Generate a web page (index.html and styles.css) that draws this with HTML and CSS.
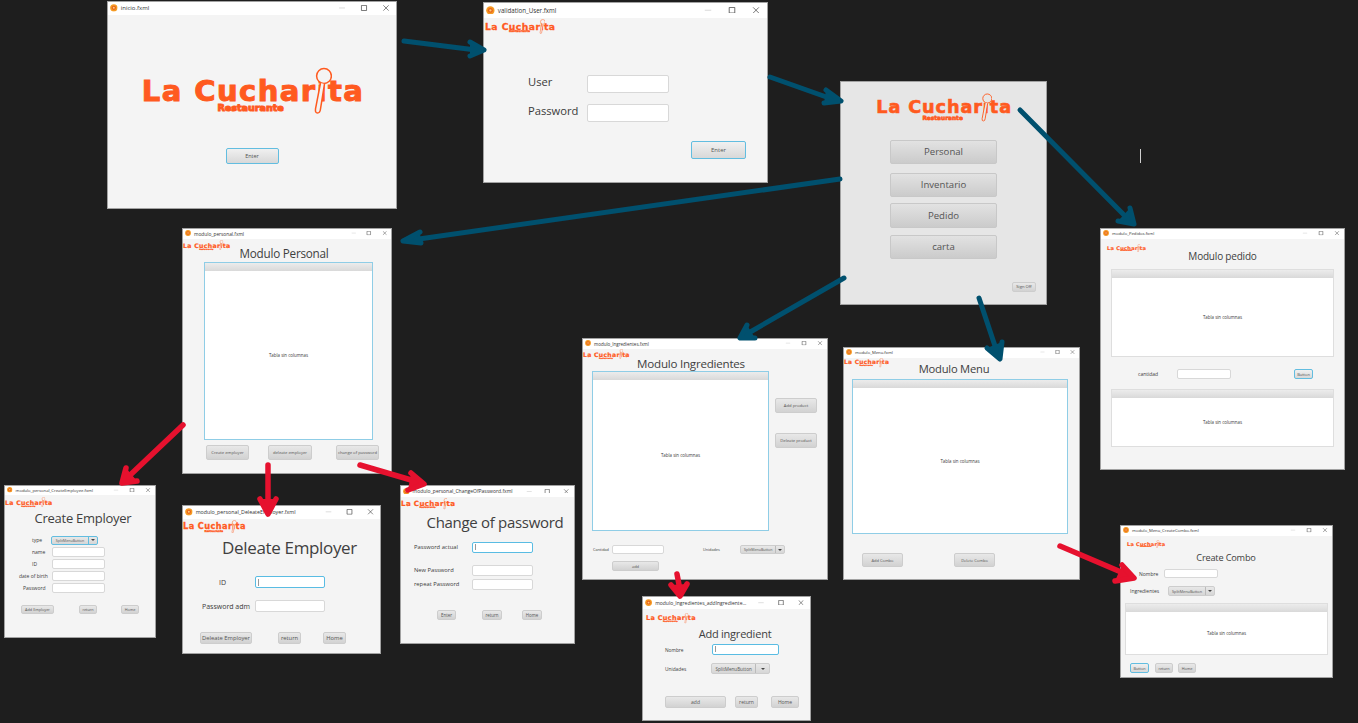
FILE: index.html
```html
<!DOCTYPE html>
<html lang="es">
<head>
    <meta charset="UTF-8">
    <meta name="viewport" content="width=device-width, initial-scale=1.0">
    <title>La Cucharita - flujo de pantallas</title>
    <link rel="stylesheet" href="styles.css">
</head>
<body>
    <svg class="defs" width="0" height="0">
        <symbol id="app" viewBox="0 0 10 10"><circle cx="5" cy="5" r="4.8" fill="#f59a23"/><circle cx="5" cy="5" r="2.8" fill="#e8621a"/><circle cx="5" cy="5" r="1.3" fill="#fbc97a"/></symbol>
        <symbol id="min" viewBox="0 0 10 10"><path d="M0 5h10" fill="none" stroke="#c4c4c4"/></symbol>
        <symbol id="max" viewBox="0 0 10 10"><path d="M.7.7h8.6v8.6H.7z" fill="none" stroke="#444" stroke-width="1.2"/></symbol>
        <symbol id="close" viewBox="0 0 10 10"><path d="M.5.5l9 9M9.5.5l-9 9" fill="none" stroke="#444" stroke-width="1.1"/></symbol>
        <symbol id="spoon" viewBox="0 0 20 47"><circle cx="12" cy="9" r="7.4"/><path d="M8.5 16 3.5 42Q3 46 5.5 46 8 46 8.5 42L12.5 17"/></symbol>
    </svg>

    <main class="canvas">
        <!-- inicio -->
        <section class="window win-inicio">
            <header class="titlebar"><svg class="app-icon"><use href="#app"/></svg><span>inicio.fxml</span><div class="controls"><svg><use href="#min"/></svg><svg><use href="#max"/></svg><svg><use href="#close"/></svg></div></header>
            <div class="win-body">
                <div class="logo"><span class="logo-name">La Cucharita</span><span class="logo-sub">Restaurante</span><svg class="spoon"><use href="#spoon"/></svg></div>
                <button class="btn focused enter">Enter</button>
            </div>
        </section>

        <!-- login -->
        <section class="window win-login">
            <header class="titlebar"><svg class="app-icon"><use href="#app"/></svg><span>validation_User.fxml</span><div class="controls"><svg><use href="#min"/></svg><svg><use href="#max"/></svg><svg><use href="#close"/></svg></div></header>
            <div class="win-body">
                <div class="logo"><span class="logo-name">La Cucharita</span><span class="logo-sub">Restaurante</span><svg class="spoon"><use href="#spoon"/></svg></div>
                <div class="form">
                    <label>User</label><input type="text">
                    <label>Password</label><input type="text">
                </div>
                <button class="btn focused enter">Enter</button>
            </div>
        </section>

        <!-- menu principal -->
        <section class="window win-main">
            <div class="win-body">
                <div class="logo"><span class="logo-name">La Cucharita</span><span class="logo-sub">Restaurante</span><svg class="spoon"><use href="#spoon"/></svg></div>
                <button class="btn nav">Personal</button>
                <button class="btn nav">Inventario</button>
                <button class="btn nav">Pedido</button>
                <button class="btn nav">carta</button>
                <button class="btn sign-off">Sign Off</button>
            </div>
        </section>

        <!-- modulo personal -->
        <section class="window win-personal">
            <header class="titlebar"><svg class="app-icon"><use href="#app"/></svg><span>modulo_personal.fxml</span><div class="controls"><svg><use href="#min"/></svg><svg><use href="#max"/></svg><svg><use href="#close"/></svg></div></header>
            <div class="win-body">
                <div class="head">
                    <div class="logo"><span class="logo-name">La Cucharita</span><span class="logo-sub">Restaurante</span><svg class="spoon"><use href="#spoon"/></svg></div>
                    <h2 class="title">Modulo Personal</h2>
                </div>
                <div class="table focused"><div class="table-head"></div><div class="table-empty">Tabla sin columnas</div></div>
                <div class="actions">
                    <button class="btn">Create employer</button>
                    <button class="btn">deleate employer</button>
                    <button class="btn">change of password</button>
                </div>
            </div>
        </section>

        <!-- create employer -->
        <section class="window win-create">
            <header class="titlebar"><svg class="app-icon"><use href="#app"/></svg><span>modulo_personal_CreateEmployee.fxml</span><div class="controls"><svg><use href="#min"/></svg><svg><use href="#max"/></svg><svg><use href="#close"/></svg></div></header>
            <div class="win-body">
                <div class="head">
                    <div class="logo"><span class="logo-name">La Cucharita</span><span class="logo-sub">Restaurante</span><svg class="spoon"><use href="#spoon"/></svg></div>
                    <h2 class="title">Create Employer</h2>
                </div>
                <div class="form">
                    <label>type</label><div class="split focused"><span>SplitMenuButton</span><i></i></div>
                    <label>name</label><input type="text">
                    <label>ID</label><input type="text">
                    <label>date of birth</label><input type="text">
                    <label>Password</label><input type="text">
                </div>
                <div class="actions">
                    <button class="btn">Add Employer</button>
                    <button class="btn">return</button>
                    <button class="btn">Home</button>
                </div>
            </div>
        </section>

        <!-- deleate employer -->
        <section class="window win-delete">
            <header class="titlebar"><svg class="app-icon"><use href="#app"/></svg><span>modulo_personal_DeleateEmployer.fxml</span><div class="controls"><svg><use href="#min"/></svg><svg><use href="#max"/></svg><svg><use href="#close"/></svg></div></header>
            <div class="win-body">
                <div class="head">
                    <div class="logo"><span class="logo-name">La Cucharita</span><span class="logo-sub">Restaurante</span><svg class="spoon"><use href="#spoon"/></svg></div>
                    <h2 class="title">Deleate Employer</h2>
                </div>
                <div class="form">
                    <label>ID</label><input class="focused caret" type="text">
                    <label>Password adm</label><input type="text">
                </div>
                <div class="actions">
                    <button class="btn">Deleate Employer</button>
                    <button class="btn">return</button>
                    <button class="btn">Home</button>
                </div>
            </div>
        </section>

        <!-- change of password -->
        <section class="window win-change">
            <header class="titlebar"><svg class="app-icon"><use href="#app"/></svg><span>modulo_personal_ChangeOfPassword.fxml</span><div class="controls"><svg><use href="#min"/></svg><svg><use href="#max"/></svg><svg><use href="#close"/></svg></div></header>
            <div class="win-body">
                <div class="head">
                    <div class="logo"><span class="logo-name">La Cucharita</span><span class="logo-sub">Restaurante</span><svg class="spoon"><use href="#spoon"/></svg></div>
                    <h2 class="title">Change of password</h2>
                </div>
                <div class="form">
                    <label>Password actual</label><input class="focused caret" type="text">
                    <label>New Password</label><input type="text">
                    <label>repeat Password</label><input type="text">
                </div>
                <div class="actions">
                    <button class="btn">Enter</button>
                    <button class="btn">return</button>
                    <button class="btn">Home</button>
                </div>
            </div>
        </section>

        <!-- modulo ingredientes -->
        <section class="window win-ingredients">
            <header class="titlebar"><svg class="app-icon"><use href="#app"/></svg><span>modulo_Ingredientes.fxml</span><div class="controls"><svg><use href="#min"/></svg><svg><use href="#max"/></svg><svg><use href="#close"/></svg></div></header>
            <div class="win-body">
                <div class="head">
                    <div class="logo"><span class="logo-name">La Cucharita</span><span class="logo-sub">Restaurante</span><svg class="spoon"><use href="#spoon"/></svg></div>
                    <h2 class="title">Modulo Ingredientes</h2>
                </div>
                <div class="split-view">
                    <div class="table focused"><div class="table-head"></div><div class="table-empty">Tabla sin columnas</div></div>
                    <div class="side">
                        <button class="btn">Add product</button>
                        <button class="btn">Deleate product</button>
                    </div>
                </div>
                <div class="inline-form">
                    <label>Cantidad</label><input type="text">
                    <label class="second">Unidades</label><div class="split"><span>SplitMenuButton</span><i></i></div>
                </div>
                <button class="btn add">add</button>
            </div>
        </section>

        <!-- add ingredient -->
        <section class="window win-add">
            <header class="titlebar"><svg class="app-icon"><use href="#app"/></svg><span>modulo_Ingredientes_addIngrediente...</span><div class="controls"><svg><use href="#min"/></svg><svg><use href="#max"/></svg><svg><use href="#close"/></svg></div></header>
            <div class="win-body">
                <div class="head">
                    <div class="logo"><span class="logo-name">La Cucharita</span><span class="logo-sub">Restaurante</span><svg class="spoon"><use href="#spoon"/></svg></div>
                    <h2 class="title">Add ingredient</h2>
                </div>
                <div class="form">
                    <label>Nombre</label><input class="focused caret" type="text">
                    <label>Unidades</label><div class="split"><span>SplitMenuButton</span><i></i></div>
                </div>
                <div class="actions">
                    <button class="btn">add</button>
                    <button class="btn">return</button>
                    <button class="btn">Home</button>
                </div>
            </div>
        </section>

        <!-- modulo menu -->
        <section class="window win-menu">
            <header class="titlebar"><svg class="app-icon"><use href="#app"/></svg><span>modulo_Menu.fxml</span><div class="controls"><svg><use href="#min"/></svg><svg><use href="#max"/></svg><svg><use href="#close"/></svg></div></header>
            <div class="win-body">
                <div class="head">
                    <div class="logo"><span class="logo-name">La Cucharita</span><span class="logo-sub">Restaurante</span><svg class="spoon"><use href="#spoon"/></svg></div>
                    <h2 class="title">Modulo Menu</h2>
                </div>
                <div class="table focused"><div class="table-head"></div><div class="table-empty">Tabla sin columnas</div></div>
                <div class="actions">
                    <button class="btn">Add Combo</button>
                    <button class="btn">Delete Combo</button>
                </div>
            </div>
        </section>

        <!-- modulo pedido -->
        <section class="window win-orders">
            <header class="titlebar"><svg class="app-icon"><use href="#app"/></svg><span>modulo_Pedidos.fxml</span><div class="controls"><svg><use href="#min"/></svg><svg><use href="#max"/></svg><svg><use href="#close"/></svg></div></header>
            <div class="win-body">
                <div class="head">
                    <div class="logo"><span class="logo-name">La Cucharita</span><span class="logo-sub">Restaurante</span><svg class="spoon"><use href="#spoon"/></svg></div>
                    <h2 class="title">Modulo pedido</h2>
                </div>
                <div class="table top-table"><div class="table-head"></div><div class="table-empty">Tabla sin columnas</div></div>
                <div class="inline-form">
                    <label>cantidad</label><input type="text">
                    <button class="btn focused">Button</button>
                </div>
                <div class="table bottom-table"><div class="table-head"></div><div class="table-empty">Tabla sin columnas</div></div>
            </div>
        </section>

        <!-- create combo -->
        <section class="window win-combo">
            <header class="titlebar"><svg class="app-icon"><use href="#app"/></svg><span>modulo_Menu_CreateCombo.fxml</span><div class="controls"><svg><use href="#min"/></svg><svg><use href="#max"/></svg><svg><use href="#close"/></svg></div></header>
            <div class="win-body">
                <div class="head">
                    <div class="logo"><span class="logo-name">La Cucharita</span><span class="logo-sub">Restaurante</span><svg class="spoon"><use href="#spoon"/></svg></div>
                    <h2 class="title">Create Combo</h2>
                </div>
                <div class="inline-form name-row"><label>Nombre</label><input type="text"></div>
                <div class="inline-form parts-row"><label>Ingredientes</label><div class="split"><span>SplitMenuButton</span><i></i></div></div>
                <div class="table"><div class="table-head"></div><div class="table-empty">Tabla sin columnas</div></div>
                <div class="actions">
                    <button class="btn focused">Button</button>
                    <button class="btn">return</button>
                    <button class="btn">Home</button>
                </div>
            </div>
        </section>

        <div class="text-cursor"></div>

        <!-- flechas -->
        <svg class="arrows" viewBox="0 0 1358 723">
            <g class="teal">
                <path d="M404 41 476 50"/><path d="M470 42 484 50 470 56"/>
                <path d="M770 77 832 99"/><path d="M826 90 841 101 824 103"/>
                <path d="M1020 110 1127 218"/><path d="M1130 208 1134 224 1118 221"/>
                <path d="M840 179 412 240"/><path d="M420 232 403 241 421 243"/>
                <path d="M844 278 745 335"/><path d="M747 325 740 338 755 338"/>
                <path d="M979 298 997 352"/><path d="M987 348 1000 359 1002 342"/>
            </g>
            <g class="red">
                <path d="M183 425 127 478"/><path d="M126 468 122 483 137 481"/>
                <path d="M268 465V510"/><path d="M260 499 268 514 276 499"/>
                <path d="M360 465 418 482"/><path d="M411 473 424 484 408 490"/>
                <path d="M677 574 680 590"/><path d="M671 585 680 596 687 584"/>
                <path d="M1060 546 1128 575"/><path d="M1122 565 1134 578 1115 581"/>
            </g>
        </svg>
    </main>
</body>
</html>
```

FILE: styles.css
```css
* { box-sizing: border-box; }
html, body { margin: 0; height: 100%; overflow: hidden; background-color: #1e1e1e; }
body { font-family: "Open Sans", "Noto Sans", sans-serif; color: #3a3a3a; }
.defs { position: absolute; }
.canvas { position: relative; width: 1358px; height: 723px; }

/* ventanas */
.window { position: absolute; background-color: #f4f4f4; outline: 1px solid #a2a2a2; outline-offset: -1px; overflow: hidden; }
.titlebar { display: flex; align-items: center; height: var(--bar); padding-left: 3px; background-color: #fff; color: #333; font-size: var(--bar-text); white-space: nowrap; }
.app-icon { width: calc(var(--bar) * .55); height: calc(var(--bar) * .55); margin-right: 3px; flex: none; }
.controls { display: flex; margin-left: auto; flex: none; background-color: #fff; }
.controls svg { width: var(--cell); height: calc(var(--cell) * .27); }

/* logo */
.logo { position: relative; display: block; width: 7.6em; height: 1.62em; font-family: "DejaVu Sans", sans-serif; font-weight: bold; color: #ff5a1f; line-height: 1; white-space: nowrap; justify-self: start; -webkit-text-stroke: .035em #ff5a1f; }
.logo-name { display: block; padding-top: .41em; line-height: .84; letter-spacing: .05em; }
.logo-sub { display: block; margin-left: 7.9em; font-size: .33em; }
.spoon { position: absolute; left: 5.86em; top: 0; width: .69em; height: 1.62em; fill: #f4f4f4; stroke: #ff5a1f; stroke-width: 1.5; }

/* controles */
.btn { display: block; padding: 0; background: linear-gradient(#e8e8e8, #d2d2d2); border: 1px solid #cdcdcd; border-radius: 2px; color: #555; font-family: inherit; white-space: nowrap; overflow: hidden; }
.btn.focused { background: linear-gradient(#f0f0f0, #d8d8d8); border-color: #62bde0; }
input { display: block; padding: 0; background-color: #fff; border: 1px solid #d8d8d8; border-radius: 2px; }
input.focused { border-color: #59bce3; }
input.caret { background: linear-gradient(#999, #999) 2px center / 1px 70% no-repeat #fff; }
.split { display: flex; background: linear-gradient(#e8e8e8, #d6d6d6); border: 1px solid #cdcdcd; border-radius: 2px; white-space: nowrap; overflow: hidden; color: #555; }
.split span { flex: 1; display: flex; align-items: center; justify-content: center; overflow: hidden; }
.split i { position: relative; flex: none; width: 20%; border-left: 1px solid #bbb; }
.split i::after { content: ""; position: absolute; left: 50%; top: 50%; margin: -1px 0 0 -2px; border: 2px solid transparent; border-top-color: #444; border-bottom: 0; }
.split.focused { border-color: #62bde0; }
.split.focused i { border-left-color: #62bde0; }

.head { display: grid; height: var(--head); }
.head > * { grid-area: 1 / 1; }
.title { margin: var(--title-top) 0 0; width: var(--title-w); font-size: var(--title-size); font-weight: 400; line-height: 1; letter-spacing: -.02em; text-align: center; color: #404040; justify-self: start; white-space: nowrap; }

.table { display: flex; flex-direction: column; border: 1px solid #dedede; background-color: #fff; }
.table.focused { border-color: #8fcde6; }
.table-head { height: 8px; flex: none; background: linear-gradient(#ececec, #d9d9d9); }
.table-empty { flex: 1; display: flex; align-items: center; justify-content: center; font-size: 4.4px; }

.actions { display: flex; }
.actions .btn { flex: none; }
.form { display: grid; align-items: center; }
.form label { display: block; white-space: nowrap; }
.inline-form { display: flex; align-items: center; }
.inline-form label { display: block; white-space: nowrap; }

/* inicio */
.win-inicio { left: 107px; top: 1px; width: 290px; height: 208px; --bar: 14px; --bar-text: 6px; --cell: 22px; }
.win-inicio .win-body { display: flex; flex-direction: column; align-items: center; padding-top: 52px; }
.win-inicio .logo { font-size: 29px; }
.win-inicio .enter { width: 53px; height: 16px; margin-top: 34px; font-size: 5.5px; }

/* login */
.win-login { left: 483px; top: 2px; width: 285px; height: 181px; --bar: 16px; --bar-text: 6.2px; --cell: 24px; }
.win-login .win-body { padding: 1px 0 0 2px; }
.win-login .logo { font-size: 9.2px; }
.win-login .form { grid-template-columns: 59px 82px; grid-auto-rows: 18px; row-gap: 11px; margin: 41px 0 0 43px; font-size: 11.2px; }
.win-login label { line-height: 14px; margin-bottom: 4px; }
.win-login input { height: 18px; }
.win-login .enter { width: 55px; height: 18px; margin: 19px 0 0 206px; font-size: 6px; }

/* menu principal */
.win-main { left: 840px; top: 81px; width: 207px; height: 224px; background-color: #e6e6e6; }
.win-main .win-body { display: flex; flex-direction: column; align-items: center; padding-top: 12px; }
.win-main .logo { font-size: 17.7px; }
.win-main .logo-sub { margin-top: .2em; }
.win-main .spoon { fill: #e6e6e6; }
.nav { width: 107px; height: 24px; font-size: 9.6px; margin-top: 7px; background: linear-gradient(#e2e2e2, #cbcbcb); border-color: #c8c8c8; }
.nav:nth-of-type(1) { margin-top: 18px; }
.nav:nth-of-type(2) { margin-top: 9px; }
.nav:nth-of-type(3) { height: 25px; margin-top: 6px; }
.sign-off { width: 24px; height: 10px; margin: 23px 0 0 172px; font-size: 4.2px; align-self: flex-start; }

/* modulo personal */
.win-personal { left: 182px; top: 228px; width: 210px; height: 246px; --bar: 11px; --bar-text: 4.8px; --cell: 15.5px; --head: 23px; --title-top: 9px; --title-w: 204px; --title-size: 11.7px; }
.win-personal .logo { font-size: 6.2px; margin: 1px 0 0 1px; }
.win-personal .table { width: 169px; height: 178px; margin-left: 22px; }
.win-personal .actions { margin: 5px 0 0 24px; font-size: 4.4px; }
.win-personal .btn { height: 15px; width: 43px; margin-right: 19px; font-size: 4.2px; }
.win-personal .btn:nth-child(2) { width: 44px; margin-right: 24px; }

/* create employer */
.win-create { left: 4px; top: 485px; width: 152px; height: 153px; --bar: 10px; --bar-text: 4.2px; --cell: 16px; --head: 40px; --title-top: 17px; --title-w: 158px; --title-size: 13px; }
.win-create .logo { font-size: 6.2px; margin: 2px 0 0 1px; }
.win-create .form { grid-template-columns: 33px 53px; grid-auto-rows: 10px; row-gap: 2px; margin-left: 15px; font-size: 5px; }
.win-create label { padding-left: 13px; }
.win-create label:nth-of-type(4) { padding-left: 0; }
.win-create label:nth-of-type(5) { padding-left: 4px; }
.win-create input { height: 10px; }
.win-create .split { width: 47px; height: 9px; margin-left: -1px; font-size: 3.6px; }
.win-create .actions { margin: 12px 0 0 17px; }
.win-create .btn { height: 9px; width: 18px; margin-right: 24px; font-size: 3.8px; }
.win-create .btn:first-child { width: 33px; margin-right: 25px; }

/* deleate employer */
.win-delete { left: 182px; top: 505px; width: 199px; height: 149px; --bar: 14px; --bar-text: 5.3px; --cell: 21px; --head: 57px; --title-top: 20px; --title-w: 215px; --title-size: 17px; }
.win-delete .logo { font-size: 8.2px; margin: 1px 0 0 1px; }
.win-delete .form { grid-template-columns: 53px 70px; row-gap: 12px; margin-left: 20px; font-size: 7px; }
.win-delete label:first-of-type { padding-left: 17px; }
.win-delete input { height: 12px; }
.win-delete .actions { margin: 20px 0 0 18px; }
.win-delete .btn { height: 12px; width: 23px; margin-right: 22px; font-size: 5.8px; }
.win-delete .btn:first-child { width: 52px; margin-right: 26px; }

/* change of password */
.win-change { left: 400px; top: 485px; width: 175px; height: 159px; --bar: 12px; --bar-text: 5px; --cell: 18.5px; --head: 45px; --title-top: 18px; --title-w: 190px; --title-size: 15px; }
.win-change .logo { font-size: 7.1px; margin: 1px 0 0 1px; }
.win-change .form { grid-template-columns: 58px 61px; grid-template-rows: 11px 23px 14px; align-items: end; margin-left: 14px; font-size: 5.8px; }
.win-change label { line-height: 11px; }
.win-change input { height: 11px; }
.win-change .actions { margin: 20px 0 0 37px; }
.win-change .btn { height: 10px; width: 20px; margin-right: 20px; font-size: 4.4px; }
.win-change .btn:first-child { width: 19px; margin-right: 26px; }

/* modulo ingredientes */
.win-ingredients { left: 582px; top: 338px; width: 246px; height: 242px; --bar: 11px; --bar-text: 4.5px; --cell: 16px; --head: 22px; --title-top: 9px; --title-w: 218px; --title-size: 11.6px; }
.win-ingredients .logo { font-size: 6.1px; margin-left: 1px; }
.split-view { display: flex; margin-left: 10px; }
.split-view .table { width: 177px; height: 160px; }
.side { margin: 27px 0 0 6px; }
.side .btn { width: 42px; height: 15px; margin-bottom: 20px; font-size: 4.2px; }
.win-ingredients .inline-form { margin: 14px 0 0 11px; font-size: 3.8px; }
.win-ingredients .inline-form label { width: 19px; }
.win-ingredients .inline-form .second { width: 37px; margin-left: 39px; }
.win-ingredients input { width: 52px; height: 9px; }
.win-ingredients .split { width: 45px; height: 9px; font-size: 3.6px; }
.win-ingredients .add { width: 47px; height: 10px; margin: 7px 0 0 30px; font-size: 4px; }

/* add ingredient */
.win-add { left: 642px; top: 596px; width: 169px; height: 125px; --bar: 13px; --bar-text: 5px; --cell: 20px; --head: 35px; --title-top: 19px; --title-w: 186px; --title-size: 11px; }
.win-add .logo { font-size: 6.5px; margin: 4px 0 0 4px; }
.win-add .form { grid-template-columns: 47px 67px; row-gap: 8px; margin-left: 23px; font-size: 4.8px; }
.win-add input { height: 11px; }
.win-add .split { width: 59px; height: 11px; margin-left: -1px; font-size: 4.6px; }
.win-add .split i { width: 24%; }
.win-add .actions { margin: 22px 0 0 23px; }
.win-add .btn { height: 12px; width: 23px; margin-right: 13px; font-size: 5px; }
.win-add .btn:first-child { width: 61px; margin-right: 9px; }
.win-add .btn:last-child { width: 28px; }

/* modulo menu */
.win-menu { left: 843px; top: 347px; width: 237px; height: 233px; --bar: 11px; --bar-text: 4.2px; --cell: 15px; --head: 21px; --title-top: 5px; --title-w: 222px; --title-size: 11.2px; }
.win-menu .logo { font-size: 5.9px; margin-left: 1px; }
.win-menu .table { width: 216px; height: 155px; margin-left: 9px; }
.win-menu .actions { margin: 19px 0 0 19px; }
.win-menu .btn { width: 41px; height: 14px; margin-right: 51px; font-size: 4px; }

/* modulo pedido */
.win-orders { left: 1100px; top: 228px; width: 245px; height: 242px; --bar: 11px; --bar-text: 4.2px; --cell: 16px; --head: 30px; --title-top: 12px; --title-w: 245px; --title-size: 10px; }
.win-orders .logo { font-size: 5.1px; margin: 5px 0 0 7px; }
.win-orders .table { width: 223px; margin-left: 11px; }
.top-table { height: 88px; }
.bottom-table { height: 58px; }
.win-orders .inline-form { height: 10px; margin: 12px 0 10px 38px; font-size: 5px; }
.win-orders .inline-form label { width: 39px; }
.win-orders input { width: 54px; height: 10px; }
.win-orders .btn { width: 19px; height: 10px; margin-left: 63px; font-size: 4px; }

/* create combo */
.win-combo { left: 1120px; top: 525px; width: 213px; height: 153px; --bar: 11px; --bar-text: 4.2px; --cell: 16px; --head: 33px; --title-top: 17px; --title-w: 212px; --title-size: 9.2px; }
.win-combo .logo { font-size: 5px; margin: 4px 0 0 7px; }
.win-combo .name-row { margin-left: 19px; font-size: 5px; }
.win-combo .name-row label { width: 25px; }
.win-combo .name-row input { width: 54px; height: 9px; }
.win-combo .parts-row { margin: 8px 0 0 10px; font-size: 5px; }
.win-combo .parts-row label { width: 38px; }
.win-combo .split { width: 47px; height: 10px; font-size: 3.8px; }
.win-combo .table { width: 203px; height: 52px; margin: 7px 0 0 5px; }
.win-combo .actions { margin: 8px 0 0 10px; }
.win-combo .btn { width: 18px; height: 10px; margin-right: 5px; font-size: 3.8px; }
.win-combo .btn:first-child { width: 19px; margin-right: 6px; }

/* flechas */
.arrows { position: absolute; left: 0; top: 0; width: 1358px; height: 723px; pointer-events: none; }
.arrows path { fill: none; stroke-width: 5; stroke-linecap: round; stroke-linejoin: round; }
.teal path { stroke: #00506e; }
.red path { stroke: #e6112e; stroke-width: 5.5; }
.teal path:nth-child(even), .red path:nth-child(even) { fill: currentColor; }
.teal { color: #00506e; }
.red { color: #e6112e; }
.text-cursor { position: absolute; left: 1140px; top: 149px; width: 1px; height: 14px; background-color: #d0d0d0; }
```
